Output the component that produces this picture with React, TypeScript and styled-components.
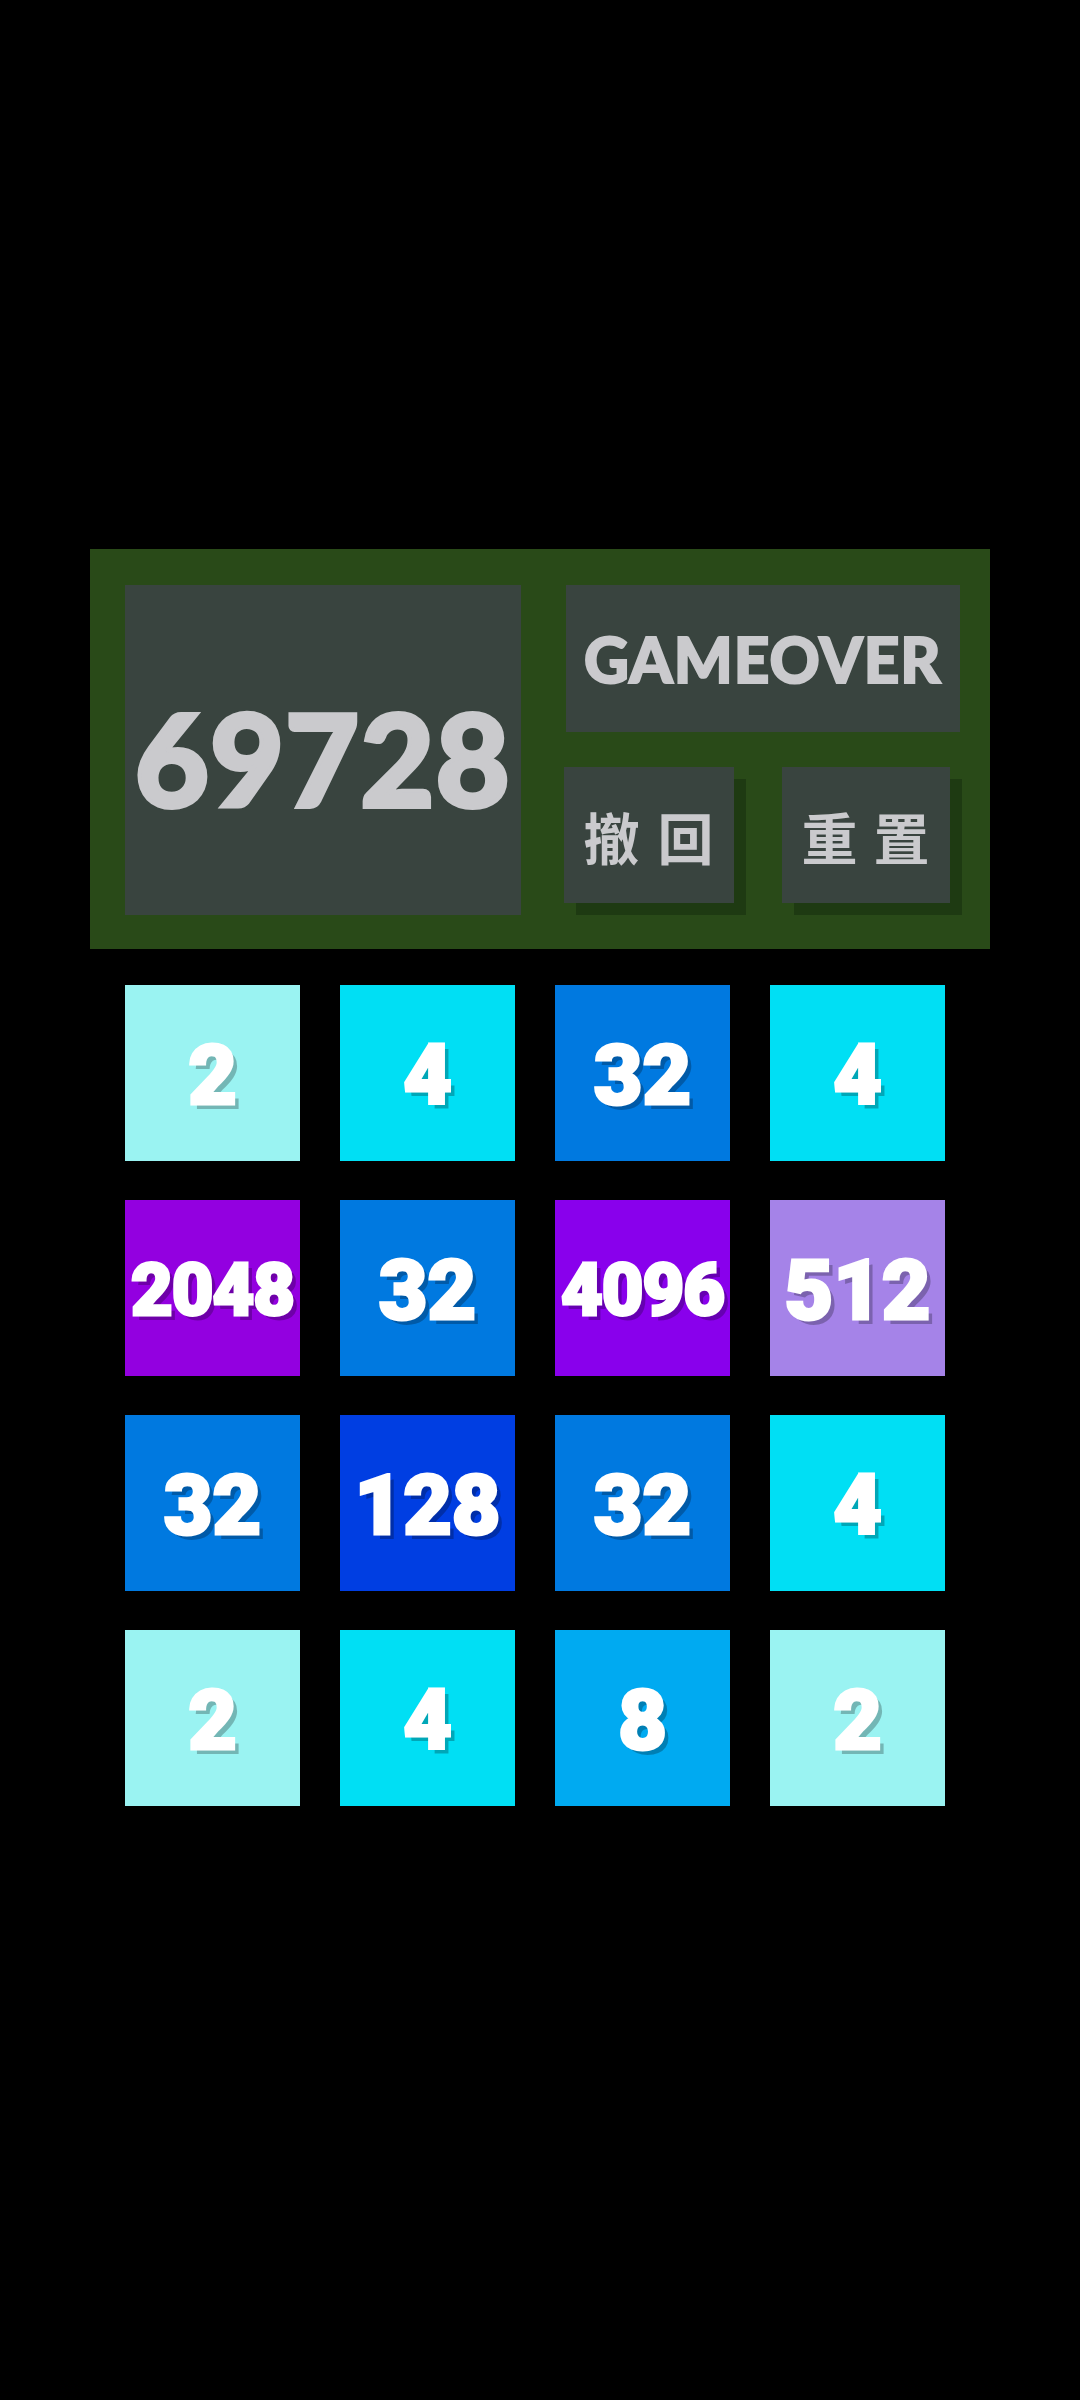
import React from "react";
import styled, { createGlobalStyle } from "styled-components";

const Global = createGlobalStyle`
  html, body { margin: 0; padding: 0; background: #000; }
  body { width: 1080px; min-height: 2400px; font-family: "Lato", "Roboto", sans-serif; }
`;

const Page = styled.div`
  width: 1080px;
  min-height: 2400px;
  background: #000;
  padding-top: 549px;
  box-sizing: border-box;
  display: flex;
  flex-direction: column;
  align-items: flex-start;
`;

const Panel = styled.section`
  margin-left: 90px;
  width: 900px;
  height: 400px;
  box-sizing: border-box;
  background: #294a18;
  padding: 36px 30px 33px 35px;
  display: flex;
  gap: 44px;
`;

const ScoreBox = styled.div`
  width: 396px;
  height: 330px;
  background: #39443f;
  display: flex;
  align-items: center;
  justify-content: center;
  color: #cacacd;
  -webkit-text-stroke: 4px #cacacd;
  font-family: "Lato", "Roboto", sans-serif;
  font-weight: 900;
  font-size: 128px;
  letter-spacing: 1px;
  padding-top: 14px;
  box-sizing: border-box;
`;

const RightCol = styled.div`
  width: 396px;
  display: flex;
  flex-direction: column;
  gap: 35px;
`;

const StatusBox = styled.div`
  height: 147px;
  margin-left: 1px;
  background: #39443f;
  display: flex;
  align-items: center;
  justify-content: center;
  color: #cacacd;
  -webkit-text-stroke: 2px #cacacd;
  font-family: "Lato", "Roboto", sans-serif;
  font-weight: 900;
  font-size: 62px;
  letter-spacing: 1px;
`;

const ButtonRow = styled.div`
  display: flex;
  gap: 48px;
  margin-left: -1px;
`;

const ActionButton = styled.button<{ $w: number; $spacing: number }>`
  width: ${(p) => p.$w}px;
  height: 136px;
  border: none;
  margin: 0;
  padding: 0 0 0 ${(p) => p.$spacing}px;
  background: #39443f;
  box-shadow: 12px 12px 0 #1e3a12;
  color: #cacacd;
  font-family: "Noto Sans CJK SC", "Noto Sans CJK TC", sans-serif;
  font-weight: 700;
  font-size: 56px;
  letter-spacing: ${(p) => p.$spacing}px;
  white-space: nowrap;
  display: flex;
  align-items: center;
  justify-content: center;
`;

const Grid = styled.div`
  margin-left: 125px;
  margin-top: 36px;
  display: grid;
  grid-template-columns: repeat(4, 175px);
  grid-auto-rows: 176px;
  column-gap: 40px;
  row-gap: 39px;
`;

const tileColors: Record<number, string> = {
  2: "#9af3f2",
  4: "#00dff4",
  8: "#00aaf1",
  32: "#0079e0",
  128: "#003ee2",
  512: "#a583e8",
  2048: "#9300e0",
  4096: "#8900ec",
};

const Tile = styled.div<{ $bg: string; $small: boolean }>`
  background: ${(p) => p.$bg};
  display: flex;
  align-items: center;
  justify-content: center;
  color: #ffffff;
  -webkit-text-stroke: 3px #ffffff;
  font-family: "Roboto", sans-serif;
  font-weight: 900;
  font-size: ${(p) => (p.$small ? 72 : 84)}px;
  letter-spacing: ${(p) => (p.$small ? -1 : 0)}px;
  text-shadow: 5px 5px 0 rgba(0, 0, 0, 0.25);
  padding-top: 4px;
  box-sizing: border-box;
`;

const board = [
  [2, 4, 32, 4],
  [2048, 32, 4096, 512],
  [32, 128, 32, 4],
  [2, 4, 8, 2],
];

export default function App() {
  return (
    <>
      <Global />
      <Page>
        <Panel>
          <ScoreBox>69728</ScoreBox>
          <RightCol>
            <StatusBox>GAMEOVER</StatusBox>
            <ButtonRow>
              <ActionButton $w={170} $spacing={18}>撤回</ActionButton>
              <ActionButton $w={168} $spacing={16}>重置</ActionButton>
            </ButtonRow>
          </RightCol>
        </Panel>
        <Grid>
          {board.flat().map((v, i) => (
            <Tile key={i} $bg={tileColors[v]} $small={v >= 1000}>
              {v}
            </Tile>
          ))}
        </Grid>
      </Page>
    </>
  );
}
